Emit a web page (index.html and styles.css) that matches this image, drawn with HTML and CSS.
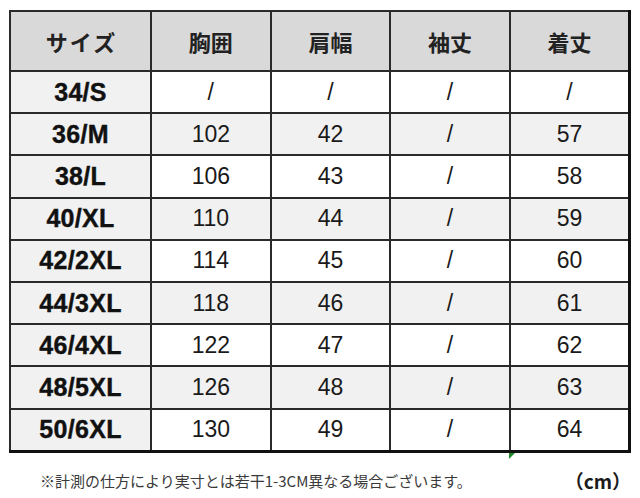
FILE: index.html
```html
<!DOCTYPE html>
<html lang="ja">
<head>
<meta charset="utf-8">
<link rel="stylesheet" href="styles.css">
</head>
<body>
<div class="page">
  <div class="table-wrap">
    <table class="size-table">
      <thead>
        <tr>
          <th class="col-size">サイズ</th>
          <th>胸囲</th>
          <th>肩幅</th>
          <th>袖丈</th>
          <th>着丈</th>
        </tr>
      </thead>
      <tbody>
        <tr><td class="size">34/S</td><td>/</td><td>/</td><td>/</td><td>/</td></tr>
        <tr class="alt"><td class="size">36/M</td><td>102</td><td>42</td><td>/</td><td>57</td></tr>
        <tr><td class="size">38/L</td><td>106</td><td>43</td><td>/</td><td>58</td></tr>
        <tr class="alt"><td class="size">40/XL</td><td>110</td><td>44</td><td>/</td><td>59</td></tr>
        <tr><td class="size">42/2XL</td><td>114</td><td>45</td><td>/</td><td>60</td></tr>
        <tr class="alt"><td class="size">44/3XL</td><td>118</td><td>46</td><td>/</td><td>61</td></tr>
        <tr><td class="size">46/4XL</td><td>122</td><td>47</td><td>/</td><td>62</td></tr>
        <tr class="alt"><td class="size">48/5XL</td><td>126</td><td>48</td><td>/</td><td>63</td></tr>
        <tr><td class="size">50/6XL</td><td>130</td><td>49</td><td>/</td><td>64</td></tr>
      </tbody>
    </table>
    <span class="marker"></span>
  </div>
  <div class="footer">
    <span class="note">※計測の仕方により実寸とは若干1-3CM異なる場合ございます。</span>
    <span class="unit">（cm）</span>
  </div>
</div>
</body>
</html>
```
FILE: styles.css
```css
html, body {
  margin: 0;
  padding: 0;
  background: #ffffff;
}
.page {
  width: 640px;
  height: 498px;
  padding: 10px 9px 0 9px;
  box-sizing: border-box;
  font-family: "Liberation Sans", Arial, "Noto Sans CJK JP", sans-serif;
  color: #1a1a1a;
}
.table-wrap {
  position: relative;
  width: 622px;
}
.size-table {
  width: 622px;
  border-collapse: collapse;
  table-layout: fixed;
  border-top: 2px solid #3a3a3a;
  border-left: 2px solid #3a3a3a;
  border-right: 3px solid #111111;
  border-bottom: 3px solid #111111;
}
.size-table th,
.size-table td {
  border: 2px solid #2a2a2a;
  text-align: center;
  vertical-align: middle;
  padding: 0;
}
.size-table th {
  background: #d9d9d9;
  height: 58px;
  font-family: "Noto Sans CJK JP", sans-serif;
  font-weight: 700;
  font-size: 22px;
  color: #222222;
  letter-spacing: 0;
}
.size-table th.col-size {
  width: 137px;
  letter-spacing: 2px;
  padding-left: 2px;
}
.size-table td {
  height: 40.2px;
  font-size: 23px;
  background: #ffffff;
  color: #1a1a1a;
}
.size-table tr.alt td {
  background: #f1f1f1;
}
.size-table td.size {
  background: #f1f1f1;
  font-weight: 700;
  font-size: 25px;
  letter-spacing: 0.3px;
  color: #111111;
  -webkit-text-stroke: 0.4px #111111;
}
.marker {
  position: absolute;
  left: 500px;
  top: 443px;
  width: 0;
  height: 0;
  border-top: 6px solid #1f8a2a;
  border-right: 6px solid transparent;
}
.footer {
  display: flex;
  justify-content: space-between;
  align-items: center;
  margin-top: 14px;
  padding-left: 31px;
  padding-right: 0;
}
.note {
  font-family: "Noto Sans CJK JP", sans-serif;
  font-size: 15px;
  color: #3a3a3a;
}
.unit {
  font-family: "Noto Sans CJK JP", "Liberation Sans", sans-serif;
  font-weight: 700;
  font-size: 19px;
  color: #1a1a1a;
}
```
